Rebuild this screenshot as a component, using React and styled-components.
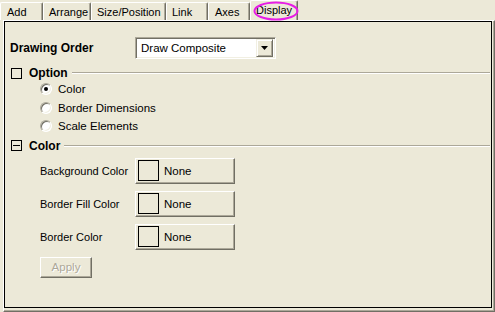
import React from "react";
import styled, { createGlobalStyle } from "styled-components";

const Global = createGlobalStyle`
  html, body { margin: 0; padding: 0; background: #ECE9D8; }
  body { font-family: "Liberation Sans", Arial, sans-serif; font-size: 11px; color: #000; }
  * { box-sizing: border-box; }
`;

const Window = styled.div`
  position: relative;
  width: 495px;
  height: 312px;
  background: #ECE9D8;
  display: flex;
  flex-direction: column;
`;

const TabStrip = styled.div`
  display: flex;
  align-items: flex-end;
  height: 20px;
`;

const Tab = styled.div`
  width: ${(p) => p.$w}px;
  height: ${(p) => (p.$active ? 20 : 18)}px;
  border-left: 1px solid #fff;
  border-top: 1px solid #fff;
  border-right: 1px solid #716F64;
  box-shadow: inset -1px 0 0 #ACA899;
  border-radius: 2px 2px 0 0;
  padding-left: ${(p) => p.$pl}px;
  padding-top: ${(p) => (p.$active ? 0 : 2)}px;
  display: flex;
  align-items: center;
  white-space: nowrap;
  line-height: 1;
  font-size: 11px;
`;

const Ellipse = styled.svg`
  position: absolute;
  left: 253px;
  top: 1px;
`;

const Outer = styled.div`
  margin-left: 3px;
  width: 492px;
  height: 292px;
  border-top: 1px solid #fff;
  border-left: 1px solid #fff;
  border-right: 1px solid #716F64;
  border-bottom: 1px solid #716F64;
  box-shadow: inset -1px -1px 0 #ACA899;
  padding: 0 2px 3px 0;
`;

const Frame = styled.div`
  border: 1px solid #000;
  height: 100%;
  display: flex;
  flex-direction: column;
`;

const OrderRow = styled.div`
  display: flex;
  align-items: center;
  margin-top: 15px;
  padding-left: 5px;
  height: 22px;
`;

const BoldLabel = styled.div`
  font-weight: bold;
  font-size: 12px;
  width: ${(p) => p.$w || "auto"};
`;

const Select = styled.div`
  width: 141px;
  height: 22px;
  border-top: 1px solid #ACA899;
  border-left: 1px solid #ACA899;
  border-right: 1px solid #fff;
  border-bottom: 1px solid #fff;
  box-shadow: inset 1px 1px 0 #716F64, inset -1px -1px 0 #F1EFE2;
  background: #fff;
  display: flex;
  align-items: center;
  padding: 2px 2px 2px 5px;
  font-size: 11.5px;
`;

const SelectText = styled.div`
  flex: 1;
`;

const DropBtn = styled.div`
  width: 17px;
  height: 18px;
  background: #ECE9D8;
  border-top: 1px solid #F1EFE2;
  border-left: 1px solid #F1EFE2;
  border-right: 1px solid #716F64;
  border-bottom: 1px solid #716F64;
  box-shadow: inset 1px 1px 0 #fff, inset -1px -1px 0 #ACA899;
  display: flex;
  align-items: center;
  justify-content: center;
`;

const GroupHeader = styled.div`
  display: flex;
  align-items: center;
  height: 14px;
  margin-top: ${(p) => p.$mt}px;
  padding-left: 6px;
  padding-right: 1px;
`;

const Box = styled.div`
  width: 11px;
  height: 11px;
  border: 1px solid #000;
  background: #ECE9D8;
  margin-right: 7px;
  display: flex;
  align-items: center;
  justify-content: center;
`;

const Minus = styled.div`
  width: 7px;
  height: 1px;
  background: #000;
`;

const Rule = styled.div`
  flex: 1;
  margin-left: 4px;
  height: 2px;
  border-top: 1px solid #ACA899;
  border-bottom: 1px solid #fff;
`;

const RadioList = styled.div`
  display: flex;
  flex-direction: column;
  padding-left: 35px;
`;

const RadioRow = styled.div`
  display: flex;
  align-items: center;
  height: 18.5px;
  font-size: 11.5px;
`;

const Radio = styled.div`
  width: 12px;
  height: 12px;
  border-radius: 50%;
  background: #fff;
  border: 1px solid;
  border-color: #ACA899 #fff #fff #ACA899;
  box-shadow: inset 1px 1px 0 #716F64, inset -1px -1px 0 #F1EFE2;
  margin-right: 6px;
  display: flex;
  align-items: center;
  justify-content: center;
`;

const Dot = styled.div`
  width: 4px;
  height: 4px;
  border-radius: 50%;
  background: #000;
`;

const ColorList = styled.div`
  display: flex;
  flex-direction: column;
  gap: 7px;
  margin-top: 5px;
  padding-left: 35px;
`;

const ColorRow = styled.div`
  display: flex;
  align-items: center;
  height: 26px;
  font-size: 11px;
`;

const Label = styled.div`
  width: 95px;
`;

const RaisedButton = styled.div`
  width: ${(p) => p.$w}px;
  height: ${(p) => p.$h}px;
  background: #ECE9D8;
  border-top: 1px solid #fff;
  border-left: 1px solid #fff;
  border-right: 1px solid #716F64;
  border-bottom: 1px solid #716F64;
  box-shadow: inset -1px -1px 0 #ACA899;
  display: flex;
  align-items: center;
`;

const ColorButton = styled(RaisedButton)`
  padding-left: 2px;
  font-size: 11.5px;
`;

const Swatch = styled.div`
  width: 21px;
  height: 21px;
  border: 1px solid #000;
  margin-right: 5px;
`;

const ApplyButton = styled(RaisedButton)`
  margin-top: 7px;
  margin-left: 35px;
  justify-content: center;
  color: #ACA899;
  text-shadow: 1px 1px 0 #fff;
  font-size: 11.5px;
`;

const tabs = [
  { name: "Add", w: 43, pl: 6 },
  { name: "Arrange", w: 48, pl: 5 },
  { name: "Size/Position", w: 75, pl: 5 },
  { name: "Link", w: 42, pl: 5 },
  { name: "Axes", w: 42, pl: 6 },
  { name: "Display", w: 48, pl: 5, active: true },
];

const colorRows = ["Background Color", "Border Fill Color", "Border Color"];
const options = ["Color", "Border Dimensions", "Scale Elements"];

export default function App() {
  return (
    <>
      <Global />
      <Window>
        <TabStrip>
          {tabs.map((t) => (
            <Tab key={t.name} $w={t.w} $pl={t.pl} $active={t.active}>
              {t.name}
            </Tab>
          ))}
        </TabStrip>
        <Ellipse width="46" height="20" viewBox="0 0 46 20">
          <ellipse cx="23" cy="10" rx="21.5" ry="8.5" fill="none" stroke="#E61EE6" strokeWidth="2" />
        </Ellipse>
        <Outer>
          <Frame>
            <OrderRow>
              <BoldLabel $w="125px">Drawing Order</BoldLabel>
              <Select>
                <SelectText>Draw Composite</SelectText>
                <DropBtn>
                  <svg width="7" height="4" viewBox="0 0 7 4">
                    <path d="M0 0H7L3.5 4Z" fill="#000" />
                  </svg>
                </DropBtn>
              </Select>
            </OrderRow>

            <GroupHeader $mt={7}>
              <Box />
              <BoldLabel>Option</BoldLabel>
              <Rule />
            </GroupHeader>
            <RadioList>
              {options.map((o, i) => (
                <RadioRow key={o}>
                  <Radio>{i === 0 && <Dot />}</Radio>
                  {o}
                </RadioRow>
              ))}
            </RadioList>

            <GroupHeader $mt={3}>
              <Box>
                <Minus />
              </Box>
              <BoldLabel>Color</BoldLabel>
              <Rule />
            </GroupHeader>
            <ColorList>
              {colorRows.map((c) => (
                <ColorRow key={c}>
                  <Label>{c}</Label>
                  <ColorButton $w={100} $h={26}>
                    <Swatch />
                    None
                  </ColorButton>
                </ColorRow>
              ))}
            </ColorList>
            <ApplyButton $w={52} $h={21}>Apply</ApplyButton>
          </Frame>
        </Outer>
      </Window>
    </>
  );
}
